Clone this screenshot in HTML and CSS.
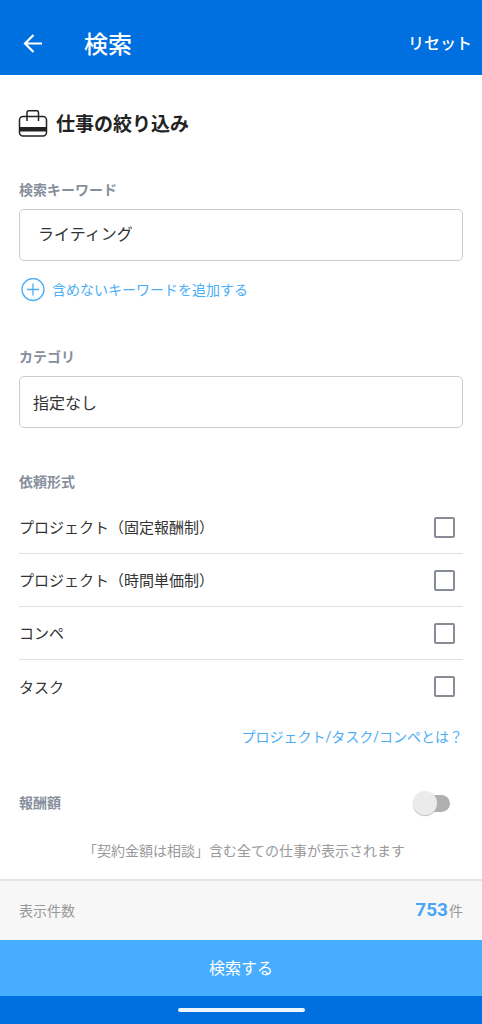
FILE: index.html
```html
<!DOCTYPE html>
<html lang="ja">
<head>
<meta charset="utf-8">
<meta name="viewport" content="width=device-width, initial-scale=1">
<title>検索</title>
<link rel="stylesheet" href="styles.css">
</head>
<body>
<form class="screen">
  <header class="app-bar">
    <button class="back" type="button" aria-label="戻る">
      <svg width="20" height="20" viewBox="0 0 20 20" fill="none" stroke="currentColor" stroke-width="2.200"><path d="M19 9.500H2M10.500 1L2 9.500l8.500 8.500"/></svg>
    </button>
    <h1 class="app-title">検索</h1>
    <button class="reset" type="reset">リセット</button>
  </header>

  <main class="content">
    <h2 class="heading">
      <svg width="30" height="28" viewBox="0 0 30 28" fill="none" stroke="currentColor" stroke-width="1.500"><rect x="1.500" y="6.500" width="27" height="19.500" rx="3.500"/><path d="M9 11V2.500Q9 .8 10.700 .8h8.100Q20.500 .8 20.500 2.500V11"/><path d="M1.500 17h27v4.500h-27z" fill="currentColor" stroke="none"/></svg>
      <span class="heading-text">仕事の絞り込み</span>
    </h2>

    <section class="field">
      <label class="label" for="keyword">検索キーワード</label>
      <input class="box keyword" id="keyword" type="text" value="ライティング">
      <button class="add" type="button">
        <svg width="24" height="24" viewBox="0 0 24 24" fill="none" stroke="currentColor" stroke-width="1.300"><circle cx="12" cy="11.500" r="11"/><path d="M6 11.500h12M12 5.500v12"/></svg>
        含めないキーワードを追加する
      </button>
    </section>

    <section class="field">
      <label class="label" for="category">カテゴリ</label>
      <select class="box category" id="category"><option>指定なし</option></select>
    </section>

    <fieldset class="types" id="types">
      <legend class="label">依頼形式</legend>
      <label class="type"><span class="type-name">プロジェクト（固定報酬制）</span><input class="check" type="checkbox"></label>
      <label class="type"><span class="type-name">プロジェクト（時間単価制）</span><input class="check" type="checkbox"></label>
      <label class="type"><span class="type-name">コンペ</span><input class="check" type="checkbox"></label>
      <label class="type"><span class="type-name">タスク</span><input class="check" type="checkbox"></label>
    </fieldset>
    <a class="help" href="#types">プロジェクト/タスク/コンペとは？</a>

    <div class="reward">
      <label class="label" for="reward">報酬額</label>
      <input class="switch" id="reward" type="checkbox" role="switch">
    </div>
    <p class="note">「契約金額は相談」含む全ての仕事が表示されます</p>
  </main>

  <footer class="footer">
    <div class="result">
      <span>表示件数</span>
      <span class="total"><strong class="count">753</strong>件</span>
    </div>
    <button class="submit" type="button">検索する</button>
    <div class="gesture"><span class="gesture-bar"></span></div>
  </footer>
</form>
</body>
</html>
```
FILE: styles.css
```css
* {
  box-sizing: border-box;
}

body {
  margin: 0;
  background: #fff;
  color: #333;
  font-family: Roboto, "Noto Sans CJK JP", sans-serif;
  font-size: 14px;
  line-height: 20px;
}

button,
input,
select {
  margin: 0;
  font: inherit;
}

button {
  padding: 0;
  border: 0;
  background: none;
  color: inherit;
  cursor: pointer;
}

svg {
  display: block;
  flex: none;
}

.screen {
  display: flex;
  flex-direction: column;
  min-height: 100vh;
}

.app-bar {
  display: flex;
  align-items: center;
  padding: 23px 10px 10px 23px;
  background: #006fdf;
  color: #fff;
}

.app-title {
  flex: 1;
  margin: 0 0 0 41px;
  padding-top: 2px;
  font-size: 24px;
  font-weight: 500;
  line-height: 40px;
}

.reset {
  font-size: 16px;
  font-weight: 500;
}

.content {
  display: flex;
  flex: 1;
  flex-direction: column;
  padding: 34px 19px 17px;
}

.heading {
  display: flex;
  align-items: center;
  gap: 8px;
  margin: 0 0 41px;
  color: #222;
  font-size: 19px;
  font-weight: 700;
  line-height: 28px;
}

.heading svg {
  margin-left: -1px;
}

.heading-text {
  padding-top: 2px;
}

.field {
  display: flex;
  flex-direction: column;
  margin-bottom: 44px;
}

.label {
  color: #878f9c;
  font-weight: 700;
}

.box {
  width: 100%;
  height: 52px;
  margin-top: 9px;
  border: 1px solid #c6cfd2;
  border-radius: 5px;
  background: #fff;
  color: #333;
  font-size: 16px;
  appearance: none;
}

.keyword {
  padding: 0 18px 4px;
}

.category {
  padding: 4px 13px 0;
}

.add {
  display: flex;
  align-items: center;
  align-self: flex-start;
  gap: 7px;
  margin: 17px 0 1px 2px;
  color: #4badf5;
}

.types {
  min-width: 0;
  margin: 0;
  padding: 0;
  border: 0;
}

.types .label {
  margin-bottom: 9px;
  padding: 0;
}

.type {
  display: flex;
  align-items: center;
  justify-content: space-between;
  height: 53px;
  padding-right: 8px;
  border-bottom: 1px solid #e0e0e0;
  font-size: 15px;
}

.type:last-child {
  border-bottom: 0;
}

.type-name {
  padding-top: 2px;
}

.check {
  width: 21px;
  height: 21px;
  border: 2px solid #878c96;
  border-radius: 2px;
  background: #fff;
  appearance: none;
}

.check:checked {
  background: #49adff;
}

.help {
  align-self: flex-end;
  margin-top: 14px;
  color: #4badf5;
  text-decoration: none;
}

.reward {
  display: flex;
  align-items: center;
  justify-content: space-between;
  height: 24px;
  margin: 44px 0 26px;
  padding-right: 13px;
}

.switch {
  position: relative;
  width: 36px;
  height: 17px;
  border-radius: 9px;
  background: #b0b0b0;
  appearance: none;
}

.switch::before {
  position: absolute;
  top: -4px;
  left: -1px;
  width: 24px;
  height: 24px;
  border-radius: 50%;
  background: #ebebeb;
  box-shadow: 0 1px 1px #bbb;
  content: "";
}

.switch:checked::before {
  right: -1px;
  left: auto;
}

.note {
  margin: 0;
  padding-left: 6px;
  color: #999;
  text-align: center;
}

.result {
  display: flex;
  align-items: center;
  justify-content: space-between;
  height: 61px;
  padding: 0 19px;
  border-top: 2px solid #e4e4e4;
  background: #f7f7f7;
  color: #999;
}

.total {
  display: flex;
  align-items: baseline;
  gap: 1px;
}

.count {
  color: #49a5f5;
  font-size: 19px;
  font-weight: 700;
}

.submit {
  display: block;
  width: 100%;
  height: 56px;
  padding-top: 2px;
  background: #49adff;
  color: #fff;
  font-size: 16px;
}

.gesture {
  display: flex;
  align-items: center;
  justify-content: center;
  height: 28px;
  background: #006fdf;
}

.gesture-bar {
  width: 127px;
  height: 4px;
  border-radius: 2px;
  background: #edf6ff;
}
```
